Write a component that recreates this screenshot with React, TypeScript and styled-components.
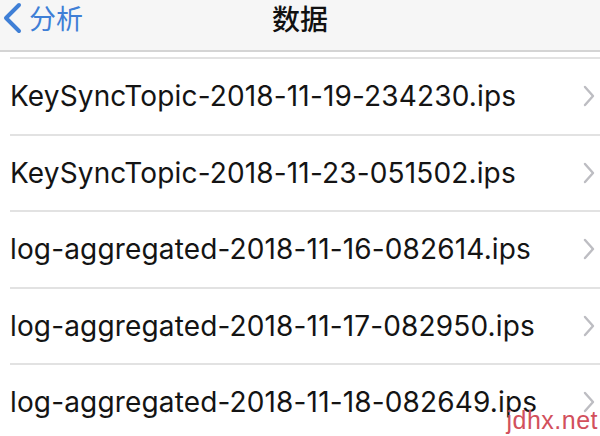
import styled, {createGlobalStyle} from "styled-components";

const GlobalStyle = createGlobalStyle`
    html, body {
        margin: 0;
        padding: 0;
        background: #ffffff;
    }
    body {
        width: 600px;
        height: 436px;
        overflow: hidden;
        font-family: Inter, "Noto Sans CJK SC", sans-serif;
    }
`;

const Page = styled.div`
    position: relative;
    width: 600px;
    height: 436px;
    overflow: hidden;
    background: #ffffff;
`;

const NavBar = styled.header`
    height: 52px;
    display: grid;
    grid-template-columns: 1fr auto 1fr;
    align-items: start;
    background: #f6f6f6;
    border-bottom: 2px solid #d4d4d4;
    box-sizing: border-box;
`;

const BackButton = styled.div`
    display: flex;
    align-items: center;
    gap: 7px;
    padding-left: 2px;
    height: 36px;
    color: #3f7fd6;
    font-family: "Noto Sans CJK SC", sans-serif;
    font-size: 27px;
    line-height: 36px;
`;

const Title = styled.h1`
    margin: 0;
    height: 36px;
    font-family: "Noto Sans CJK SC", sans-serif;
    font-size: 28px;
    line-height: 36px;
    font-weight: 500;
    color: #111111;
`;

const List = styled.ul`
    list-style: none;
    margin: 0;
    padding: 5px 0 0;
`;

const Row = styled.li`
    height: 76.5px;
    display: flex;
    align-items: center;
    justify-content: space-between;
    margin-left: 10px;
    border-top: 2px solid #e2e2e2;
    box-sizing: border-box;
`;

const FileName = styled.span`
    font-size: 28px;
    color: #141414;
    letter-spacing: 0.15px;
`;

const Chevron = styled.svg`
    width: 12px;
    height: 22px;
    margin-right: 5px;
    flex-shrink: 0;
`;

const Watermark = styled.span`
    position: absolute;
    right: 2px;
    bottom: 1px;
    font-family: "Liberation Sans", sans-serif;
    font-size: 25px;
    color: #d2505c;
    letter-spacing: 0.5px;
`;

const files = [
    "KeySyncTopic-2018-11-19-234230.ips",
    "KeySyncTopic-2018-11-23-051502.ips",
    "log-aggregated-2018-11-16-082614.ips",
    "log-aggregated-2018-11-17-082950.ips",
    "log-aggregated-2018-11-18-082649.ips",
];

export default function App() {
    return (
        <Page>
            <GlobalStyle />
            <NavBar>
                <BackButton>
                    <svg width="20" height="32" viewBox="0 0 20 32">
                        <path
                            d="M17 3 L4 16 L17 29"
                            fill="none"
                            stroke="#3f7fd6"
                            strokeWidth="4"
                            strokeLinecap="round"
                            strokeLinejoin="round"
                        />
                    </svg>
                    分析
                </BackButton>
                <Title>数据</Title>
                <div />
            </NavBar>
            <List>
                {files.map((name) => (
                    <Row key={name}>
                        <FileName>{name}</FileName>
                        <Chevron viewBox="0 0 12 22">
                            <path
                                d="M2 2 L10 11 L2 20"
                                fill="none"
                                stroke="#bdbdc2"
                                strokeWidth="2.4"
                                strokeLinecap="round"
                                strokeLinejoin="round"
                            />
                        </Chevron>
                    </Row>
                ))}
            </List>
            <Watermark>jdhx.net</Watermark>
        </Page>
    );
}
